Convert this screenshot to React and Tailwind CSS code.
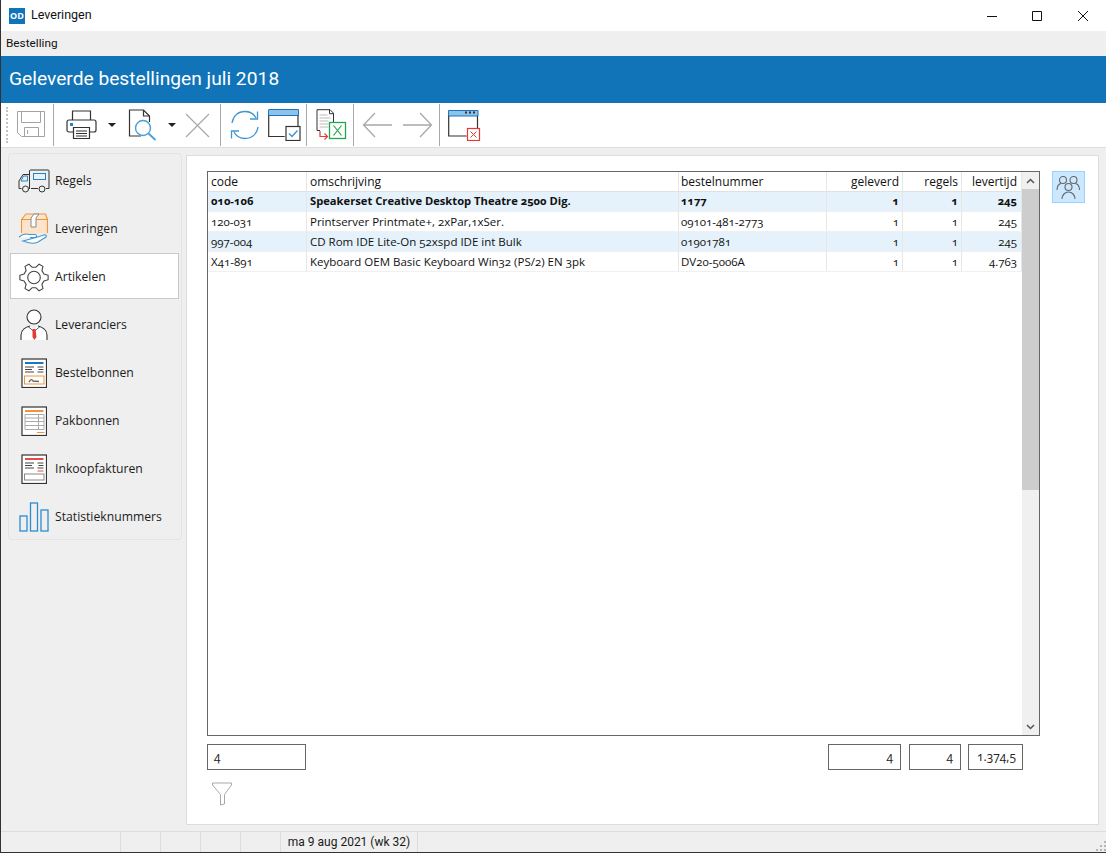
const rows = [
  { code: '010-106', oms: 'Speakerset Creative Desktop Theatre 2500 Dig.', nr: '1177', gel: '1', reg: '1', lev: '245', bold: true, tint: true },
  { code: '120-031', oms: 'Printserver Printmate+, 2xPar,1xSer.', nr: '09101-481-2773', gel: '1', reg: '1', lev: '245' },
  { code: '997-004', oms: 'CD Rom IDE Lite-On 52xspd IDE int Bulk', nr: '01901781', gel: '1', reg: '1', lev: '245', tint: true },
  { code: 'X41-891', oms: 'Keyboard OEM Basic Keyboard Win32 (PS/2) EN 3pk', nr: 'DV20-5006A', gel: '1', reg: '1', lev: '4.763' },
]

function Sep() {
  return <div className="w-[1px] h-[42px] bg-[#a8a8a8] shrink-0" />
}

function Caret() {
  return <div className="w-0 h-0 border-x-[4px] border-x-transparent border-t-[4px] border-t-[#222] shrink-0" />
}

function SaveIcon() {
  return (
    <svg width="30" height="30" viewBox="0 0 30 30" fill="none" stroke="#a3a3a3" strokeWidth="1">
      <path d="M1.5 1.5h27v25h-23l-4-4z" />
      <path d="M5.5 1.5v11h19v-11" />
      <path d="M8.5 26.5v-9h14v9M11.5 20v4" />
    </svg>
  )
}

function PrintIcon() {
  return (
    <svg width="32" height="30" viewBox="0 0 32 30" fill="none" stroke="#333" strokeWidth="1.2">
      <path d="M6.5 10V1h18v9" />
      <path d="M7 22H3a2 2 0 0 1-2-2v-8a2 2 0 0 1 2-2h25a2 2 0 0 1 2 2v8a2 2 0 0 1-2 2h-4" />
      <path d="M7.500 17.500h16v11h-16z" fill="#fff" />
      <path d="M10 21h11M10 23.500h11M10 26h11" strokeWidth="1" />
      <rect x="4" y="13" width="3" height="3" fill="#1a86d0" stroke="none" />
    </svg>
  )
}

function PreviewIcon() {
  return (
    <svg width="30" height="32" viewBox="0 0 30 32" fill="none">
      <path d="M13 27H1.500V1h14l6 6v6M15.500 1v6h6" stroke="#333" strokeWidth="1.200" />
      <circle cx="15" cy="19" r="7.500" stroke="#4a9fd8" strokeWidth="1.400" fill="#fff" />
      <path d="M20.500 24.500l7 6.500" stroke="#4a9fd8" strokeWidth="1.800" />
    </svg>
  )
}

function RefreshIcon() {
  return (
    <svg width="30" height="30" viewBox="0 0 30 30" fill="none" stroke="#3f96d3" strokeWidth="1.300">
      <path d="M2 13C3 6 8 1.500 15 1.500c5 0 9 2.500 11 6.500" />
      <path d="M28 17c-1 7-6 11.500-13 11.500-5 0-9-2.500-11-6.500" />
      <path d="M27.500 1.500V9h-7.500" />
      <path d="M1.500 28.500V21H9" />
    </svg>
  )
}

function WindowCheckIcon() {
  return (
    <svg width="33" height="32" viewBox="0 0 33 32" fill="none">
      <rect x="1" y="1" width="29" height="5" fill="#8cc3ea" />
      <path d="M1 .5h29.500V6.500H.5V.5" stroke="#1b75bc" strokeWidth="1" />
      <path d="M.7 6.500v21h16M30 6.500V17" stroke="#333" strokeWidth="1.200" />
      <rect x="18" y="17.500" width="14" height="14" fill="#fff" stroke="#333" strokeWidth="1.200" />
      <path d="M21 24.500l3 3 5.500-6" stroke="#3f96d3" strokeWidth="1.500" />
    </svg>
  )
}

function ExcelIcon() {
  return (
    <svg width="31" height="32" viewBox="0 0 31 32" fill="none">
      <path d="M4 21.500H1V.7h13l3.500 3.500V13M13.500 .7v4h4" stroke="#333" strokeWidth="1" />
      <path d="M3.500 6h8M3.500 9h11M3.500 12h9M3.500 15h9M3.500 18h9" stroke="#bbb" strokeWidth="1" />
      <path d="M4 22v5.500h7M8.500 24.500l3 3-3 3" stroke="#e53935" strokeWidth="1.200" />
      <rect x="13.500" y="13.500" width="16" height="16" fill="#fff" stroke="#1fa84f" strokeWidth="1.300" />
      <path d="M17.500 16.500l8 10M25.500 16.500l-8 10" stroke="#1fa84f" strokeWidth="1.200" />
    </svg>
  )
}

function ArrowIcon({ flip }) {
  return (
    <svg width="31" height="26" viewBox="0 0 31 26" fill="none" stroke="#a8a8a8" strokeWidth="1.300" className={flip ? 'rotate-180' : ''}>
      <path d="M13 1L1.500 13 13 25M1.500 13H30" />
    </svg>
  )
}

function WindowCloseIcon() {
  return (
    <svg width="33" height="31" viewBox="0 0 33 31" fill="none">
      <rect x="1" y="1" width="29" height="5" fill="#8cc3ea" />
      <path d="M.5 .5h29.500v5.500H.5z" stroke="#1b75bc" strokeWidth="1" />
      <rect x="17" y="1.500" width="2" height="2" fill="#333" />
      <rect x="21" y="1.500" width="2" height="2" fill="#333" />
      <rect x="25" y="1.500" width="2" height="2" fill="#333" />
      <path d="M.7 6v20h18M29.500 6v13" stroke="#333" strokeWidth="1.200" />
      <rect x="19.500" y="18.500" width="12" height="12" fill="#fff" stroke="#e53935" strokeWidth="1.200" />
      <path d="M22.500 21.500l6 6M28.500 21.500l-6 6" stroke="#e53935" strokeWidth="1" />
    </svg>
  )
}

function TruckIcon() {
  return (
    <svg width="32" height="24" viewBox="0 0 32 24" fill="none" stroke="#333" strokeWidth="1">
      <path d="M11 5.500H5L1 12v7.500h2.500M11 19.500h1" />
      <path d="M11.500 19.500V2a1 1 0 0 1 1-1h17.500a1 1 0 0 1 1 1v17.500h-3M20 19.500h-7" />
      <path d="M3 12l2.500-5h4v5z" stroke="#1a86d0" />
      <rect x="15.500" y="4.500" width="12" height="6" stroke="#1a86d0" />
      <circle cx="7.500" cy="20" r="3" />
      <circle cx="24" cy="20" r="3" />
    </svg>
  )
}

function BoxIcon() {
  return (
    <svg width="32" height="32" viewBox="0 0 32 32" fill="none">
      <path d="M3.500 21V6.500L8 1h20l2 5.500V21z" fill="#fbe3cc" />
      <path d="M3.500 20V6.500h26V20M3.500 6.500L8 1h19.500l2 5.500" stroke="#f0943c" strokeWidth="1.100" />
      <path d="M13 14V5l3-4h5l-3 4v9z" fill="#fff" stroke="#888" strokeWidth="1" />
      <path d="M1 24c3-2.500 7-3.500 10-2.500h6c2 0 2 3 0 3h-5m6 0l8-2.500c2-.5 3 1 2 2l-8 5c-3 1.500-7 1.500-10 .5L5 28z" fill="#fff" stroke="#3f96d3" strokeWidth="1.100" />
    </svg>
  )
}

// six teeth: left, right and four on the diagonals
function gearPath() {
  const pts = []
  for (let i = 0; i < 6; i++) {
    const a = (i * 60 * Math.PI) / 180
    const at = (r, d) => {
      const t = a + (d * Math.PI) / 180
      return `${(15 + r * Math.cos(t)).toFixed(2)} ${(14.5 + r * Math.sin(t)).toFixed(2)}`
    }
    pts.push(at(10.5, -19), at(14.3, -9), at(14.3, 9), at(10.5, 19))
  }
  return `M${pts.join('L')}Z`
}

function GearIcon() {
  return (
    <svg width="30" height="29" viewBox="0 0 30 29" fill="none" stroke="#444" strokeWidth="1.100" strokeLinejoin="round">
      <circle cx="15" cy="14.500" r="6.300" />
      <path d={gearPath()} />
    </svg>
  )
}

function PersonIcon() {
  return (
    <svg width="28" height="32" viewBox="0 0 28 32" fill="none" stroke="#333" strokeWidth="1.100">
      <path d="M1 31v-5c0-5 5-8 9-9l4 3 4-3c4 1 9 4 9 9v5z" fill="#fff" stroke="none" />
      <circle cx="14" cy="8" r="7" fill="#fff" />
      <path d="M1 31v-5c0-5 5-8 9-9M27 31v-5c0-5-5-8-9-9" />
      <path d="M8 17.500l6 5 6-5" strokeWidth=".8" />
      <path d="M12.500 20h3l1 8-2 3-2-3z" fill="#e53935" stroke="none" />
    </svg>
  )
}

function DocIcon({ color, children }) {
  return (
    <svg width="26" height="30" viewBox="0 0 26 30" fill="none">
      <rect x="1" y="1" width="24.500" height="28.500" fill="#fff" stroke="#333" strokeWidth="1.200" />
      <path d="M4 5h18.500" stroke={color} strokeWidth="2" />
      {children}
    </svg>
  )
}

function BarsIcon() {
  return (
    <svg width="30" height="30" viewBox="0 0 30 30" fill="none" stroke="#2b8cd0" strokeWidth="1.300">
      <rect x="1" y="14" width="7" height="15" />
      <rect x="11.500" y="1" width="7" height="28" />
      <rect x="22" y="8" width="7" height="21" />
    </svg>
  )
}

const textLines = (
  <path d="M4 9h9M4 11.500h7M4 14h9M16.500 9h6M17.500 11.500h5M16.500 14h6" stroke="#444" strokeWidth="1" />
)

const navItems = [
  { label: 'Regels', icon: <TruckIcon /> },
  { label: 'Leveringen', icon: <BoxIcon /> },
  { label: 'Artikelen', icon: <GearIcon />, active: true },
  { label: 'Leveranciers', icon: <PersonIcon /> },
  {
    label: 'Bestelbonnen',
    icon: (
      <DocIcon color="#1a78c2">
        {textLines}
        <rect x="3.500" y="18" width="19.500" height="8" stroke="#f0943c" strokeWidth="1" />
        <path d="M8 24c2-3 3-3 4-1l6 .5" stroke="#666" strokeWidth="1.400" />
      </DocIcon>
    ),
  },
  {
    label: 'Pakbonnen',
    icon: (
      <DocIcon color="#f0943c">
        <path d="M4 8.500h19v15H4zM4 12h19M4 15.500h19M4 19.500h19M17.500 8.500v15" stroke="#aaa" strokeWidth="1" />
        <path d="M16 26.500h7.500" stroke="#f0943c" strokeWidth="1" />
      </DocIcon>
    ),
  },
  {
    label: 'Inkoopfakturen',
    icon: (
      <DocIcon color="#e24b4b">
        {textLines}
        <path d="M16.500 17h6" stroke="#e24b4b" strokeWidth="1" />
        <rect x="3.500" y="20" width="19.500" height="6" stroke="#888" strokeWidth="1" />
      </DocIcon>
    ),
  },
  { label: 'Statistieknummers', icon: <BarsIcon /> },
]

const cols = 'grid grid-cols-[99px_372px_148px_76px_59px_60px]'

function Cell({ right, children, className = '' }) {
  return (
    <div className={`h-full border-r border-[#e6e6e6] px-[3px] whitespace-nowrap overflow-hidden flex items-center ${right ? 'justify-end' : ''} ${className}`}>
      {children}
    </div>
  )
}

function SumBox({ className, children }) {
  return (
    <div className={`h-[26px] border border-[#666] flex items-center text-[12px] text-[#222] bg-white ${className}`}>
      {children}
    </div>
  )
}

export default function App() {
  return (
    <div className="w-[1106px] h-[853px] overflow-hidden flex flex-col bg-[#efefef] border-l border-b border-[#333] text-[12px] text-[#111] font-['Open_Sans','Liberation_Sans',sans-serif] oldstyle-nums">
      {/* title bar */}
      <div className="h-[31px] bg-white flex items-center shrink-0">
        <div className="ml-[8px] w-[16px] h-[16px] bg-[#1174bb] text-white text-[9px] font-bold flex items-center justify-center lining-nums">OD</div>
        <span className="ml-[6px] text-[12.5px] text-[#111] font-['Roboto',sans-serif]">Leveringen</span>
        <div className="ml-auto flex items-center">
          <svg width="10" height="10" viewBox="0 0 10 10" stroke="#111" className="mr-[35px]"><path d="M0 5.500h10" /></svg>
          <svg width="10" height="10" viewBox="0 0 10 10" fill="none" stroke="#111" className="mr-[36px]"><path d="M.5 .5h9v9h-9z" /></svg>
          <svg width="10" height="10" viewBox="0 0 10 10" stroke="#111" className="mr-[18px]"><path d="M0 0l10 10M10 0L0 10" /></svg>
        </div>
      </div>

      {/* menu */}
      <div className="h-[25px] flex items-center pl-[5px] text-[11.8px] text-[#111] font-['Roboto',sans-serif] shrink-0">Bestelling</div>

      {/* heading */}
      <div className="h-[47px] bg-[#1174b8] text-white text-[19.2px] font-['Roboto',sans-serif] lining-nums flex items-center pl-[8px] shrink-0">
        Geleverde bestellingen juli 2018
      </div>

      {/* toolbar */}
      <div className="h-[45px] bg-white border-b border-[#ddd] flex items-center shrink-0 pl-[5px]">
        <div className="w-[2px] h-[36px] border-l-2 border-dotted border-[#c4c4c4]" />
        <div className="ml-[8px]"><SaveIcon /></div>
        <div className="ml-[7px]"><Sep /></div>
        <div className="ml-[12px]"><PrintIcon /></div>
        <div className="ml-[10px]"><Caret /></div>
        <div className="ml-[12px]"><PreviewIcon /></div>
        <div className="ml-[10px]"><Caret /></div>
        <svg width="25" height="25" viewBox="0 0 25 25" stroke="#a8a8a8" strokeWidth="1.200" className="ml-[9px]">
          <path d="M1 1l23 23M24 1L1 24" />
        </svg>
        <div className="ml-[10px]"><Sep /></div>
        <div className="ml-[9px]"><RefreshIcon /></div>
        <div className="ml-[8px]"><WindowCheckIcon /></div>
        <div className="ml-[5px]"><Sep /></div>
        <div className="ml-[9px]"><ExcelIcon /></div>
        <div className="ml-[6px]"><Sep /></div>
        <div className="ml-[8px]"><ArrowIcon /></div>
        <div className="ml-[9px]"><ArrowIcon flip /></div>
        <div className="ml-[6px]"><Sep /></div>
        <div className="ml-[8px]"><WindowCloseIcon /></div>
      </div>

      {/* body */}
      <div className="flex-1 min-h-0 flex pt-[7px] pb-[6px] pr-[7px]">
        <div className="w-[174px] ml-[7px] -mt-[2px] h-[387px] border border-[#e4e4e4] rounded-[4px] shrink-0 pl-[1px] pr-[2px] pt-[2px] flex flex-col">
          {navItems.map((it) => (
            <div
              key={it.label}
              className={`flex items-center shrink-0 pt-[2px] ${it.active ? 'h-[46px] my-[1px] bg-white border border-[#c8c8c8] font-medium' : 'h-[48px] border border-transparent'}`}
            >
              <div className="w-[44px] flex justify-center shrink-0 pl-[1px]">{it.icon}</div>
              <span className="text-[12.2px] text-[#1c1c1c]">{it.label}</span>
            </div>
          ))}
        </div>

        <div className="flex-1 ml-[4px] bg-white border border-[#ddd] pt-[15px] pl-[20px] flex">
          <div className="w-[833px] shrink-0 flex flex-col">
            <div className="h-[565px] border border-[#666] flex">
              <div className="flex-1 min-w-0 flex flex-col">
                <div className={`${cols} h-[20px] border-b border-[#e0e0e0] text-[12px]`}>
                  <Cell>code</Cell>
                  <Cell>omschrijving</Cell>
                  <Cell className="pl-[2px]">bestelnummer</Cell>
                  <Cell right>geleverd</Cell>
                  <Cell right>regels</Cell>
                  <Cell right className="pr-[4px]">levertijd</Cell>
                </div>
                {rows.map((r) => (
                  <div
                    key={r.code}
                    className={`${cols} h-[20px] border-b border-[#f0f0f0] ${r.tint ? 'bg-[#e5f1fb]' : 'bg-white'} ${r.bold ? 'font-bold text-[11.2px]' : 'text-[11.5px]'}`}
                  >
                    <Cell>{r.code}</Cell>
                    <Cell>{r.oms}</Cell>
                    <Cell className="pl-[2px]">{r.nr}</Cell>
                    <Cell right>{r.gel}</Cell>
                    <Cell right>{r.reg}</Cell>
                    <Cell right className="pr-[4px]">{r.lev}</Cell>
                  </div>
                ))}
              </div>
              <div className="w-[17px] bg-[#f0f0f0] flex flex-col items-center shrink-0">
                <div className="h-[17px] flex items-center justify-center">
                  <svg width="9" height="6" viewBox="0 0 9 6" fill="none" stroke="#555" strokeWidth="1.500"><path d="M1 5l3.500-3.500L8 5" /></svg>
                </div>
                <div className="w-full h-[301px] bg-[#cdcdcd]" />
                <div className="mt-auto h-[17px] flex items-center justify-center">
                  <svg width="9" height="6" viewBox="0 0 9 6" fill="none" stroke="#555" strokeWidth="1.500"><path d="M1 1l3.500 3.500L8 1" /></svg>
                </div>
              </div>
            </div>

            <div className="flex mt-[8px]">
              <SumBox className="w-[99px] pl-[6px]">4</SumBox>
              <SumBox className="w-[73px] justify-end ml-[522px] pr-[7px]">4</SumBox>
              <SumBox className="w-[52px] justify-end ml-[8px] pr-[7px]">4</SumBox>
              <SumBox className="w-[55px] justify-end ml-[7px] pr-[6px] text-[11.5px]">1.374,5</SumBox>
            </div>

            <svg width="20" height="24" viewBox="0 0 20 24" fill="none" stroke="#a8a8a8" strokeWidth="1" className="mt-[12px] ml-[5px]">
              <path d="M.5 1h19v2L12.500 12.500V22l-4 1V12.500L.5 3z" />
            </svg>
          </div>

          <div className="ml-[12px] w-[33px] h-[32px] bg-[#cce8ff] border border-[#99d1ff] flex items-center justify-center">
            <svg width="25" height="25" viewBox="0 0 25 25" fill="none" stroke="#666" strokeWidth="1.100">
              <circle cx="7" cy="5" r="3.500" />
              <circle cx="17.500" cy="5" r="3.500" />
              <path d="M1 15c0-4 2-6 4-6.500M23.500 15c0-4-2-6-4-6.500" />
              <circle cx="12.500" cy="12" r="3.500" />
              <path d="M6 24c0-4 3-7 6.500-7s6.500 3 6.500 7" />
            </svg>
          </div>
        </div>
      </div>

      {/* status bar */}
      <div className="h-[21px] border-t border-[#dcdcdc] flex items-center shrink-0 text-[12px] text-[#1a1a1a] font-['Roboto',sans-serif] lining-nums">
        <div className="h-full w-[40px] ml-[119px] border-l border-[#dcdcdc]" />
        <div className="h-full w-[40px] border-l border-[#dcdcdc]" />
        <div className="h-full w-[40px] border-l border-[#dcdcdc]" />
        <div className="h-full w-[40px] border-l border-[#dcdcdc]" />
        <div className="h-full w-[138px] border-l border-r border-[#dcdcdc] flex items-center justify-center whitespace-nowrap">ma 9 aug 2021 (wk 32)</div>
        <svg width="10" height="10" viewBox="0 0 10 10" fill="#b5b5b5" className="ml-auto mt-[8px]">
          <rect x="8" y="0" width="2" height="2" />
          <rect x="4" y="4" width="2" height="2" />
          <rect x="8" y="4" width="2" height="2" />
          <rect x="0" y="8" width="2" height="2" />
          <rect x="4" y="8" width="2" height="2" />
          <rect x="8" y="8" width="2" height="2" />
        </svg>
      </div>
    </div>
  )
}
